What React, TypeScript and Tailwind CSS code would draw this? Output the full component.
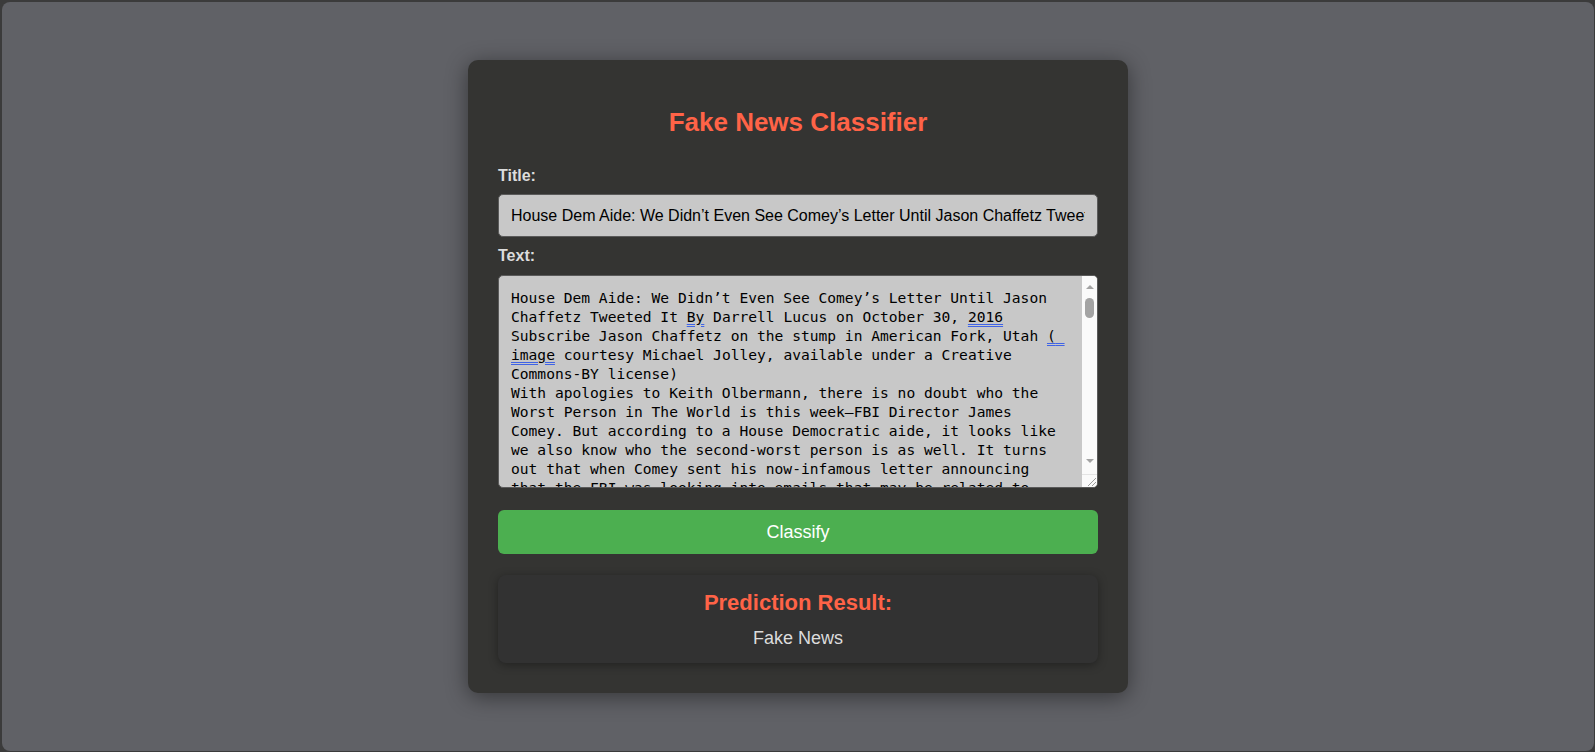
const articleRest = `With apologies to Keith Olbermann, there is no doubt who the Worst Person in The World is this week–FBI Director James Comey. But according to a House Democratic aide, it looks like we also know who the second-worst person is as well. It turns out that when Comey sent his now-infamous letter announcing that the FBI was looking into emails that may be related to Hillary Clinton’s email server, the ranking Democrats on the relevant committees didn’t hear about it from Comey. They found out via a tweet from one of the Republican committee chairmen.
As we now know, Comey notified the Republican chairmen and Democratic ranking members of the House Intelligence, Judiciary, and Oversight committees that his agency was reviewing emails it had recently discovered in order to see if they contained classified information. Not long after this letter went out, Oversight Committee Chairman Jason Chaffetz set the political world ablaze with this tweet.
FBI Dir just informed me, "The FBI has learned of the existence of emails that appear to be pertinent to the investigation." Case reopened
— Jason Chaffetz (@jasoninthehouse) October 28, 2016
Of course, we now know that this was not the case . Comey was actually saying that it was reviewing the emails in light of “an unrelated case”–which we now know to be Anthony Weiner’s sexting with a teenager. But apparently such little things as facts didn’t matter to Chaffetz. The Utah Republican had already vowed to initiate a raft of investigations if Hillary wins–at least two years’ worth, and possibly an entire term’s worth of them. Apparently Chaffetz thought the FBI was already doing his work for him–resulting in a tweet that briefly roiled the nation before cooler heads realized it was a dud.`;

const mark = "underline decoration-double decoration-[#3f63e6] underline-offset-[2px]";

const Label = ({ children, className }: { children: string; className?: string }) => {
  return (
    <label className={"block text-[16px] leading-[17px] font-bold text-[#dcdcdc] " + (className ?? "")}>
      {children}
    </label>
  );
};

// the textarea's scrollbar, drawn (headless chrome only gives overlay bars)
const ScrollBar = () => {
  return (
    <div className="flex w-[15px] shrink-0 flex-col items-center bg-[#fafafa]">
      <div className="mt-[9px] h-0 w-0 border-x-[4.5px] border-b-[4px] border-x-transparent border-b-[#a3a3a3]" />
      <div className="mt-[9px] h-[20px] w-[9px] rounded-full bg-[#a3a3a3]" />
      <div className="flex-1" />
      <div className="h-0 w-0 border-x-[4.5px] border-t-[4px] border-x-transparent border-t-[#a3a3a3]" />
      <div className="mt-[11px] flex h-[13px] w-full items-end justify-end border-t border-[#e4e4e4]">
        <svg width="12" height="12" viewBox="0 0 12 12">
          <line x1="3" y1="11" x2="11" y2="3" stroke="#9c9c9c" strokeWidth="1" />
          <line x1="7" y1="11" x2="11" y2="7" stroke="#9c9c9c" strokeWidth="1" />
        </svg>
      </div>
    </div>
  );
};

const App = () => {
  return (
    <div
      className="h-screen w-full bg-[#3b3b3b] pt-[2px] pl-[2px] pr-[1px] pb-[1px]"
      style={{ fontFamily: '"Liberation Sans", Arial, sans-serif' }}
    >
      <div className="flex h-full w-full items-center justify-center rounded-[8px] bg-[#606166]">
        <div className="w-[660px] rounded-[10px] bg-[#343432] p-[30px] shadow-[0_4px_22px_rgba(0,0,0,0.45)]">
          <h2 className="mt-[17px] text-center text-[26px] leading-[30px] font-bold text-[#ff6347]">
            Fake News Classifier
          </h2>

          <Label className="mt-[30px] mb-[10px]">Title:</Label>
          <div className="flex h-[43px] items-center rounded-[5px] border border-[#5a5a5a] bg-[#c8c8c8] px-[12px]">
            <div className="flex-1 overflow-hidden whitespace-nowrap text-[16px] text-black">
              House Dem Aide: We Didn’t Even See Comey’s Letter Until Jason Chaffetz Tweeted It
            </div>
          </div>

          <Label className="mt-[10px] mb-[11px]">Text:</Label>
          <div className="flex h-[213px] overflow-hidden rounded-[5px] border border-[#5a5a5a] bg-[#c8c8c8]">
            <div className="flex-1 overflow-hidden p-[12px]">
              <div
                className="whitespace-pre-wrap text-[14.6px] leading-[19px] text-black"
                style={{ fontFamily: '"DejaVu Sans Mono", "Liberation Mono", monospace' }}
              >
                House Dem Aide: We Didn’t Even See Comey’s Letter Until Jason Chaffetz Tweeted It{" "}
                <span className={mark}>By</span> Darrell Lucus on October 30, <span className={mark}>2016</span>{" "}
                Subscribe Jason Chaffetz on the stump in American Fork, Utah <span className={mark}>( image</span>{" "}
                courtesy Michael Jolley, available under a Creative Commons-BY license){"\n"}
                {articleRest}
              </div>
            </div>
            <ScrollBar />
          </div>

          <button className="mt-[22px] block h-[44px] w-full rounded-[6px] bg-[#4caf50] text-[18px] text-white">
            Classify
          </button>

          <div className="mt-[21px] h-[88px] rounded-[8px] bg-[#323232] px-[15px] pt-[15px] text-center shadow-[0_2px_10px_rgba(0,0,0,0.35)]">
            <h3 className="text-[22px] leading-[25px] font-bold text-[#ff6347]">Prediction Result:</h3>
            <p className="mt-[13px] text-[18px] leading-[21px] text-[#dcdcdc]">Fake News</p>
          </div>
        </div>
      </div>
    </div>
  );
};

export default App;
